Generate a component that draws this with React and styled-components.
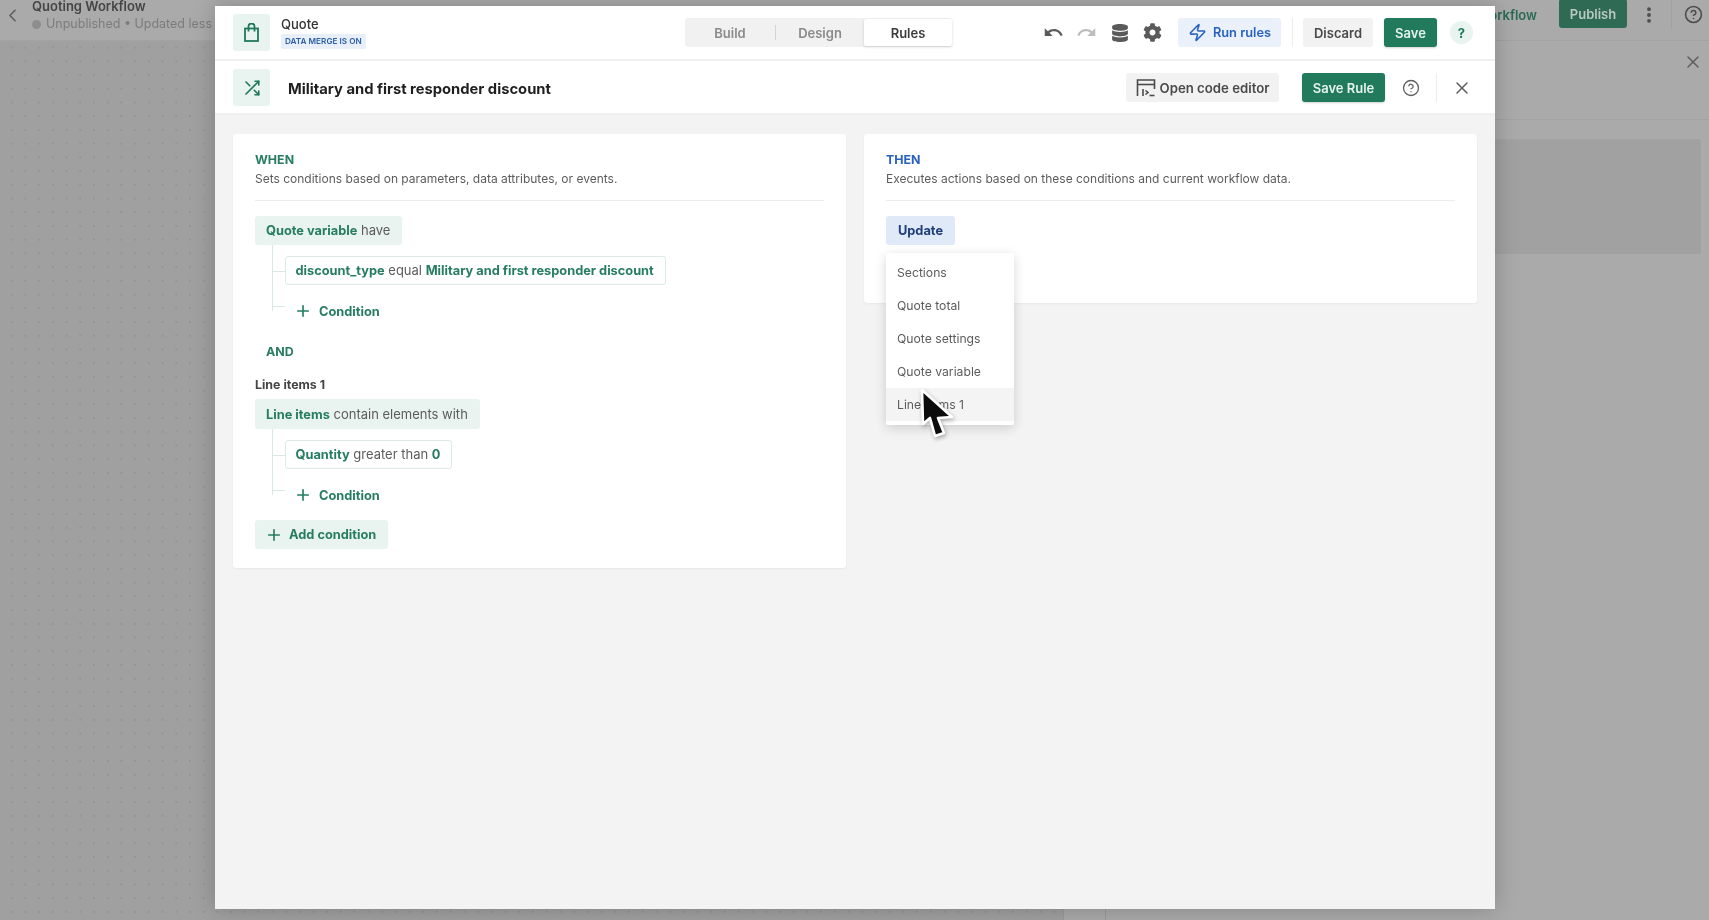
import React from 'react';
import styled, { createGlobalStyle } from 'styled-components';
import { ChevronLeft, CircleHelp, EllipsisVertical, Plus, X, Zap } from 'lucide-react';
import { MdUndo, MdRedo } from 'react-icons/md';
import { FaCog, FaDatabase } from 'react-icons/fa';
import { FiShuffle } from 'react-icons/fi';

const GREEN = '#207a5b';
const GREEN_TEXT = '#267d60';
const GREEN_SOFT = '#e9f3f0';

const GlobalStyle = createGlobalStyle`
  html, body {
    margin: 0;
    padding: 0;
    height: 100%;
    overflow: hidden;
    background: #aaaaaa;
    font-family: Inter, "Liberation Sans", sans-serif;
  }
  * { box-sizing: border-box; }
`;

const Page = styled.div`
  position: relative;
  width: 1709px;
  height: 920px;
  overflow: hidden;
  filter: blur(0.45px);
`;

/* dimmed workflow page behind the modal */
const Backdrop = styled.div`
  display: flex;
  flex-direction: column;
  height: 100%;
  background: #aaaaaa;
`;

const TopBar = styled.div`
  flex: 0 0 41px;
  display: flex;
  align-items: flex-start;
  border-bottom: 1px solid #a3a3a3;
  color: #4a4a4a;
`;

const BackSlot = styled.div`
  flex: 0 0 32px;
  height: 30px;
  display: flex;
  align-items: center;
  padding-left: 2px;
  color: #5d5d5d;
`;

const Workflow = styled.div`
  flex: 1;
  display: flex;
  flex-direction: column;
  margin-top: -1px;
`;

const WorkflowName = styled.div`
  font-size: 13px;
  line-height: 15px;
  font-weight: 600;
  color: #454545;
`;

const WorkflowStatus = styled.div`
  display: flex;
  align-items: center;
  gap: 5px;
  margin-top: 2px;
  font-size: 12.5px;
  line-height: 16px;
  color: #7c7c7c;
  white-space: nowrap;
`;

const StatusDot = styled.span`
  width: 9px;
  height: 9px;
  border-radius: 50%;
  background: #8e8e8e;
`;

const BackLink = styled.div`
  font-size: 13px;
  font-weight: 600;
  line-height: 30px;
  color: #2a6a54;
  margin-right: 22px;
`;

const PublishButton = styled.div`
  width: 68px;
  height: 29px;
  margin-top: -1px;
  border-radius: 3px;
  background: #2f6a54;
  color: #b9c9c3;
  font-size: 13px;
  font-weight: 600;
  display: flex;
  align-items: center;
  justify-content: center;
`;

const KebabSlot = styled.div`
  width: 44px;
  height: 29px;
  display: flex;
  align-items: center;
  justify-content: center;
  color: #4c4c4c;
`;

const HelpSlot = styled(KebabSlot)`
  width: 38px;
  padding-left: 6px;
  border-left: 1px solid #a1a1a1;
`;

const Stage = styled.div`
  flex: 1;
  display: flex;
`;

const Canvas = styled.div`
  flex: 0 0 1063px;
  background-color: #a0a0a0;
  background-image: radial-gradient(circle, #949494 1px, transparent 1.4px);
  background-size: 13.73px 13.73px;
  background-position: 4.8px -0.3px;
`;

const Rail = styled.div`
  flex: 0 0 43px;
  border-left: 1px solid #9a9a9a;
  border-right: 1px solid #9a9a9a;
`;

const SidePanel = styled.div`
  flex: 1;
  display: flex;
  flex-direction: column;
`;

const SideHeader = styled.div`
  flex: 0 0 79px;
  display: flex;
  justify-content: flex-end;
  align-items: center;
  padding: 0 6px 37px 0;
  border-bottom: 1px solid #a3a3a3;
  color: #5e5e5e;
`;

const SideBox = styled.div`
  height: 115px;
  margin: 19px 8px 0 18px;
  border-radius: 3px;
  background: #a1a1a1;
`;

/* modal */
const Modal = styled.div`
  position: absolute;
  left: 215px;
  top: 6px;
  width: 1280px;
  height: 903px;
  display: flex;
  flex-direction: column;
  background: #f3f3f3;
  box-shadow: 0 0 22px rgba(0, 0, 0, 0.22);
`;

const BuilderRow = styled.div`
  flex: 0 0 55px;
  display: flex;
  align-items: center;
  padding: 0 22px 0 18px;
  background: #fff;
  border-bottom: 2px solid #f0f0f0;
`;

const RuleRow = styled(BuilderRow)`
  flex: 0 0 54px;
  padding-top: 1px;
  padding-right: 23px;
`;

const IconBox = styled.div`
  flex: 0 0 37px;
  height: 37px;
  border-radius: 3px;
  background: ${GREEN_SOFT};
  color: ${GREEN};
  display: flex;
  align-items: center;
  justify-content: center;
`;

const DocBlock = styled.div`
  flex: 0 0 415px;
  padding-left: 11px;
`;

const DocName = styled.div`
  font-size: 13px;
  line-height: 16px;
  font-weight: 500;
  color: #333;
`;

const MergeBadge = styled.span`
  display: block;
  width: fit-content;
  margin-top: 2px;
  padding: 0 4px;
  height: 15px;
  line-height: 15px;
  border-radius: 2px;
  background: #e8eff9;
  color: #2c5fa8;
  font-size: 8.2px;
  font-weight: 600;
  white-space: nowrap;
`;

const Tabs = styled.div`
  flex: 0 0 267px;
  height: 29px;
  display: flex;
  align-items: center;
  border-radius: 3px;
  background: #f1f1f1;
`;

const Tab = styled.div`
  flex: 0 0 ${(p) => p.$w}px;
  height: ${(p) => (p.$active ? '27px' : '15px')};
  display: flex;
  align-items: center;
  justify-content: center;
  font-size: 13px;
  font-weight: 600;
  color: ${(p) => (p.$active ? '#3c3c3c' : '#8a8a8a')};
  background: ${(p) => (p.$active ? '#fff' : 'transparent')};
  border-radius: ${(p) => (p.$active ? '2px' : '0')};
  box-shadow: ${(p) => (p.$active ? '0 1px 3px rgba(0, 0, 0, 0.16)' : 'none')};
  border-right: ${(p) => (p.$split ? '1px solid #d4d4d4' : 'none')};
`;

const Tools = styled.div`
  margin-left: 85px;
  display: flex;
  align-items: center;
`;

const ToolSlot = styled.div`
  flex: 0 0 33px;
  display: flex;
  align-items: center;
  justify-content: center;
  color: ${(p) => (p.$off ? '#bdbdbd' : '#5a5a5a')};
`;

const Button = styled.div`
  height: 29px;
  display: flex;
  align-items: center;
  justify-content: center;
  gap: ${(p) => p.$gap || 0}px;
  width: ${(p) => p.$w}px;
  margin-left: ${(p) => p.$ml || 0}px;
  border-radius: 3px;
  font-size: 13px;
  font-weight: 600;
  white-space: nowrap;
`;

const RunButton = styled(Button)`
  background: #eaf1fb;
  color: #2a62c0;
  font-size: 12.8px;
`;

const GreyButton = styled(Button)`
  background: #f2f2f2;
  color: #4a4a4a;
`;

const EditorButton = styled(GreyButton)`
  font-size: 13.2px;
`;

const SaveButton = styled(Button)`
  background: ${GREEN};
  color: #e6f2ee;
  box-shadow: 0 1px 2px rgba(0, 0, 0, 0.18);
`;

const ThinLine = styled.div`
  flex: 0 0 1px;
  height: 29px;
  margin-left: ${(p) => p.$ml}px;
  background: #ececec;
`;

const HelpBubble = styled.div`
  width: 23px;
  height: 23px;
  margin-left: 13px;
  border-radius: 50%;
  background: ${GREEN_SOFT};
  color: ${GREEN};
  font-size: 13px;
  font-weight: 700;
  display: flex;
  align-items: center;
  justify-content: center;
`;

const RuleTitle = styled.div`
  flex: 1;
  padding: 2px 0 0 18px;
  font-size: 14.75px;
  font-weight: 700;
  color: #1f1f1f;
`;

const RuleIcon = styled.div`
  flex: 0 0 ${(p) => p.$w}px;
  margin-left: ${(p) => p.$ml || 0}px;
  display: flex;
  align-items: center;
  justify-content: center;
  color: #5e5e5e;
`;

const Columns = styled.div`
  flex: 1;
  display: grid;
  grid-template-columns: 613px 613px;
  gap: 18px;
  align-items: start;
  padding: 19px 18px;
`;

const Card = styled.div`
  background: #fff;
  border-radius: 3px;
  box-shadow: 0 1px 2px rgba(0, 0, 0, 0.05);
  padding: 18px 22px;
  min-height: ${(p) => p.$min}px;
`;

const CardLabel = styled.div`
  font-size: 12.4px;
  line-height: 16px;
  font-weight: 700;
  color: ${(p) => p.$color};
`;

const CardHint = styled.div`
  margin-top: 3px;
  font-size: 12px;
  line-height: 16px;
  color: #5c5c5c;
  padding-bottom: 13px;
  border-bottom: 1px solid #ececec;
  margin-bottom: 15px;
`;

const Strong = styled.b`
  font-size: 12.8px;
  font-weight: 700;
  color: ${GREEN_TEXT};
`;

const GroupChip = styled.div`
  display: inline-block;
  height: ${(p) => p.$h || 29}px;
  line-height: ${(p) => p.$h || 29}px;
  padding: 0 12px 0 11px;
  border-radius: 3px;
  background: ${GREEN_SOFT};
  color: #5c5c5c;
  font-size: 13px;
  white-space: nowrap;
  vertical-align: top;
`;

const Tree = styled.div`
  position: relative;
  margin-left: 17px;
  padding: 11px 0 0 13px;
  &::before {
    content: '';
    position: absolute;
    left: 0;
    top: 0;
    bottom: 15px;
    width: 1px;
    background: #d8e8e3;
  }
`;

const TreeRow = styled.div`
  position: relative;
  display: flex;
  &::before {
    content: '';
    position: absolute;
    left: -13px;
    top: 50%;
    width: 13px;
    height: 1px;
    background: #d8e8e3;
  }
`;

const ConditionChip = styled.div`
  height: 29px;
  line-height: 27px;
  padding: 0 11px 0 9.5px;
  border: 1px solid #dcebe6;
  border-radius: 3px;
  background: #fff;
  color: #5c5c5c;
  font-size: 13px;
  white-space: nowrap;
`;

const AddLink = styled.div`
  height: 30px;
  margin-top: 11px;
  padding-left: 9px;
  display: flex;
  align-items: center;
  gap: 7px;
  font-size: 12.8px;
  font-weight: 700;
  color: ${GREEN_TEXT};
`;

const AndLabel = styled.div`
  margin-top: 18px;
  padding-left: 11px;
  font-size: 12.4px;
  line-height: 16px;
  font-weight: 700;
  color: ${GREEN_TEXT};
`;

const GroupName = styled.div`
  margin: 17px 0 6px;
  font-size: 12.4px;
  line-height: 16px;
  font-weight: 700;
  color: #444;
`;

const AddCondition = styled.div`
  display: inline-flex;
  align-items: center;
  gap: 6px;
  height: 29px;
  margin-top: 10px;
  padding: 0 12px 0 10px;
  border-radius: 3px;
  background: ${GREEN_SOFT};
  font-size: 12.8px;
  font-weight: 700;
  color: ${GREEN_TEXT};
  white-space: nowrap;
`;

const ActionBlock = styled.div`
  position: relative;
  display: inline-block;
`;

const UpdateChip = styled.div`
  height: 29px;
  width: 69px;
  border-radius: 3px;
  background: #dfe9f8;
  color: #1f3f78;
  font-size: 12.8px;
  font-weight: 700;
  display: flex;
  align-items: center;
  justify-content: center;
`;

const Menu = styled.div`
  position: absolute;
  left: 0;
  top: 37px;
  width: 128px;
  padding: 3px 0 4px;
  border-radius: 2px;
  background: #fff;
  box-shadow: 0 3px 12px rgba(0, 0, 0, 0.16);
`;

const MenuItem = styled.div`
  height: 33px;
  display: flex;
  align-items: center;
  padding-left: 11px;
  font-size: 12.2px;
  color: #5c5c5c;
  background: ${(p) => (p.$hover ? '#f4f4f4' : 'transparent')};
`;

const Pointer = styled.svg`
  position: absolute;
  left: 917px;
  top: 386px;
  filter: drop-shadow(1px 2px 2px rgba(0, 0, 0, 0.3));
`;

function BagIcon() {
  return (
    <svg width="15" height="19" viewBox="0 0 15 19" fill="none" stroke="currentColor" strokeWidth="1.8">
      <rect x="1" y="5.5" width="13" height="12.5" />
      <path d="M4.5 8.5V3.5a3 3 0 0 1 6 0v5" />
    </svg>
  );
}

function CodeIcon() {
  return (
    <svg width="20" height="20" viewBox="0 0 20 20" fill="none" stroke="#4a4a4a" strokeWidth="1.6">
      <path d="M1.5 18V2h17v9" />
      <path d="M1.5 6.5h17" />
      <path d="M7 11v7" />
      <path d="M9.5 12.5l2.5 2-2.5 2" />
      <path d="M13.5 17.5h5" />
    </svg>
  );
}

const MENU_ITEMS = ['Sections', 'Quote total', 'Quote settings', 'Quote variable', 'Line items 1'];

function App() {
  return (
    <Page>
      <GlobalStyle />
      <Backdrop>
        <TopBar>
          <BackSlot>
            <ChevronLeft size={21} strokeWidth={1.8} />
          </BackSlot>
          <Workflow>
            <WorkflowName>Quoting Workflow</WorkflowName>
            <WorkflowStatus>
              <StatusDot />
              Unpublished • Updated less than a minute ago
            </WorkflowStatus>
          </Workflow>
          <BackLink>Edit workflow</BackLink>
          <PublishButton>Publish</PublishButton>
          <KebabSlot>
            <EllipsisVertical size={20} strokeWidth={2.6} />
          </KebabSlot>
          <HelpSlot>
            <CircleHelp size={19} strokeWidth={2} />
          </HelpSlot>
        </TopBar>
        <Stage>
          <Canvas />
          <Rail />
          <SidePanel>
            <SideHeader>
              <X size={20} strokeWidth={1.8} />
            </SideHeader>
            <SideBox />
          </SidePanel>
        </Stage>
      </Backdrop>

      <Modal>
        <BuilderRow>
          <IconBox>
            <BagIcon />
          </IconBox>
          <DocBlock>
            <DocName>Quote</DocName>
            <MergeBadge>DATA MERGE IS ON</MergeBadge>
          </DocBlock>
          <Tabs>
            <Tab $w={91} $split>Build</Tab>
            <Tab $w={88}>Design</Tab>
            <Tab $w={88} $active>Rules</Tab>
          </Tabs>
          <Tools>
            <ToolSlot><MdUndo size={21} /></ToolSlot>
            <ToolSlot $off><MdRedo size={21} /></ToolSlot>
            <ToolSlot><FaDatabase size={18} /></ToolSlot>
            <ToolSlot><FaCog size={19} /></ToolSlot>
            <RunButton $w={103} $ml={9} $gap={6}>
              <Zap size={19} strokeWidth={2} />
              Run rules
            </RunButton>
            <ThinLine $ml={11} />
            <GreyButton $w={70} $ml={10}>Discard</GreyButton>
            <SaveButton $w={53} $ml={11}>Save</SaveButton>
            <HelpBubble>?</HelpBubble>
          </Tools>
        </BuilderRow>

        <RuleRow>
          <IconBox>
            <FiShuffle size={18} strokeWidth={2.2} />
          </IconBox>
          <RuleTitle>Military and first responder discount</RuleTitle>
          <EditorButton $w={153} $gap={4}>
            <CodeIcon />
            Open code editor
          </EditorButton>
          <SaveButton $w={83} $ml={23}>Save Rule</SaveButton>
          <RuleIcon $w={18} $ml={17}>
            <CircleHelp size={18} strokeWidth={1.7} />
          </RuleIcon>
          <ThinLine $ml={16} />
          <RuleIcon $w={20} $ml={15}>
            <X size={20} strokeWidth={1.8} />
          </RuleIcon>
        </RuleRow>

        <Columns>
          <Card $min={434}>
            <CardLabel $color={GREEN_TEXT}>WHEN</CardLabel>
            <CardHint>Sets conditions based on parameters, data attributes, or events.</CardHint>
            <GroupChip>
              <Strong>Quote variable</Strong> have
            </GroupChip>
            <Tree>
              <TreeRow>
                <ConditionChip>
                  <Strong>discount_type</Strong> equal <Strong>Military and first responder discount</Strong>
                </ConditionChip>
              </TreeRow>
              <TreeRow>
                <AddLink>
                  <Plus size={18} strokeWidth={2.2} />
                  Condition
                </AddLink>
              </TreeRow>
            </Tree>
            <AndLabel>AND</AndLabel>
            <GroupName>Line items 1</GroupName>
            <GroupChip $h={30}>
              <Strong>Line items</Strong> contain elements with
            </GroupChip>
            <Tree>
              <TreeRow>
                <ConditionChip>
                  <Strong>Quantity</Strong> greater than <Strong>0</Strong>
                </ConditionChip>
              </TreeRow>
              <TreeRow>
                <AddLink>
                  <Plus size={18} strokeWidth={2.2} />
                  Condition
                </AddLink>
              </TreeRow>
            </Tree>
            <AddCondition>
              <Plus size={18} strokeWidth={2.2} />
              Add condition
            </AddCondition>
          </Card>

          <Card $min={169}>
            <CardLabel $color="#2a62c0">THEN</CardLabel>
            <CardHint>Executes actions based on these conditions and current workflow data.</CardHint>
            <ActionBlock>
              <UpdateChip>Update</UpdateChip>
              <Menu>
                {MENU_ITEMS.map((item) => (
                  <MenuItem key={item} $hover={item === 'Line items 1'}>
                    {item}
                  </MenuItem>
                ))}
              </Menu>
            </ActionBlock>
          </Card>
        </Columns>
      </Modal>

      <Pointer width="42" height="56" viewBox="0 0 42 56">
        <path
          d="M5 4 L6 38 L13 32 L18 50 L27 47 L21 32 L35 31 Z"
          fill="#0c0c0c"
          stroke="#fff"
          strokeWidth="2.6"
          strokeLinejoin="round"
        />
      </Pointer>
    </Page>
  );
}

export default App;
